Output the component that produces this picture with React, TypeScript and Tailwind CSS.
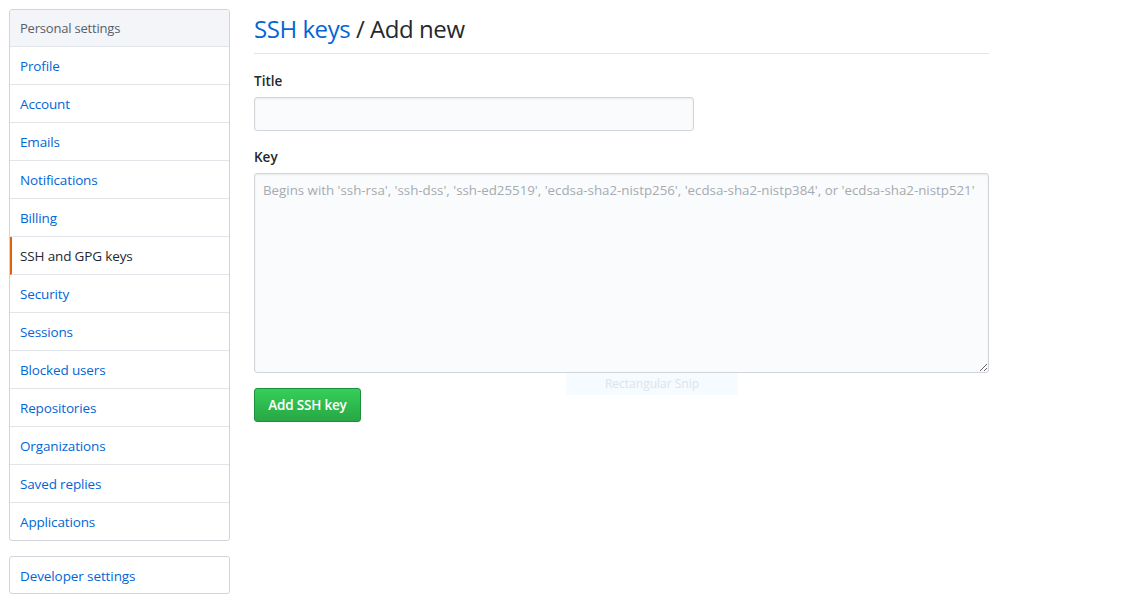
import React from 'react';

const menuItems = [
  'Profile',
  'Account',
  'Emails',
  'Notifications',
  'Billing',
  'SSH and GPG keys',
  'Security',
  'Sessions',
  'Blocked users',
  'Repositories',
  'Organizations',
  'Saved replies',
  'Applications',
];

const font = { fontFamily: '"Open Sans", "Noto Sans", "Liberation Sans", sans-serif' };

export default function App() {
  const active = 'SSH and GPG keys';

  return (
    <div className="w-[1135px] h-[606px] bg-white overflow-hidden text-[#24292e]" style={font}>
      <div className="flex gap-6 pt-[9px] pl-[9px]">
        {/* Sidebar */}
        <div className="w-[221px] flex-shrink-0 flex flex-col gap-[15px]">
          <nav className="border border-[#d1d5da] rounded-[3px] overflow-hidden">
            <div className="h-[37px] pt-[2px] flex items-center px-[10px] bg-[#f3f5f8] border-b border-[#e1e4e8] text-[13px] text-[#586069] tracking-[-0.2px]">
              Personal settings
            </div>
            {menuItems.map((item, i) => {
              const last = i === menuItems.length - 1;
              return (
                <a
                  key={item}
                  href="#"
                  className={`flex items-center px-[10px] pt-[2px] text-[13.5px] tracking-[-0.15px] ${
                    last ? 'h-[37px]' : 'h-[38px] border-b border-[#e1e4e8]'
                  } ${
                    item === active
                      ? 'border-l-2 border-l-[#e36209] pl-[8px] text-[#24292e]'
                      : 'text-[#0366d6]'
                  }`}
                >
                  {item}
                </a>
              );
            })}
          </nav>
          <nav className="border border-[#d1d5da] rounded-[3px]">
            <a href="#" className="h-[36px] pt-[2px] flex items-center px-[10px] text-[13.5px] tracking-[-0.1px] text-[#0366d6]">
              Developer settings
            </a>
          </nav>
        </div>

        {/* Main */}
        <div className="w-[735px] relative">
          <div className="border-b border-[#e1e4e8] pt-[4px] pb-[8px] mb-[17px]">
            <h2 className="text-[24px] leading-[32px] font-normal tracking-[-0.45px]">
              <a href="#" className="text-[#0366d6]">SSH keys</a> / Add new
            </h2>
          </div>

          <label className="block text-[13.5px] font-semibold leading-[20px] mb-[6px]">Title</label>
          <input
            className="block w-[440px] h-[34px] bg-[#fafbfc] border border-[#d1d5da] rounded-[3px] shadow-[inset_0_1px_2px_rgba(27,31,35,0.075)] outline-none"
          />

          <label className="block text-[13.5px] font-semibold leading-[20px] mt-[16px] mb-[6px]">Key</label>
          <textarea
            className="block w-[735px] h-[200px] bg-[#fafbfc] border border-[#d1d5da] rounded-[3px] shadow-[inset_0_1px_2px_rgba(27,31,35,0.075)] px-[8px] py-[6px] text-[13.3px] leading-[20px] outline-none placeholder:text-[#a5abb1]"
            placeholder="Begins with 'ssh-rsa', 'ssh-dss', 'ssh-ed25519', 'ecdsa-sha2-nistp256', 'ecdsa-sha2-nistp384', or 'ecdsa-sha2-nistp521'"
          />

          <button className="mt-[15px] w-[107px] h-[34px] rounded-[3px] border border-[#1e8f3e] bg-gradient-to-b from-[#34d058] to-[#28a745] text-white text-[13.5px] font-semibold tracking-[-0.2px]">
            Add SSH key
          </button>

          {/* screenshot tool overlay */}
          <div className="absolute left-[312px] top-[364px] w-[172px] h-[22px] bg-[#f5fbff] flex items-center justify-center text-[12px] text-[#dde4ea]">
            Rectangular Snip
          </div>
        </div>
      </div>
    </div>
  );
}
